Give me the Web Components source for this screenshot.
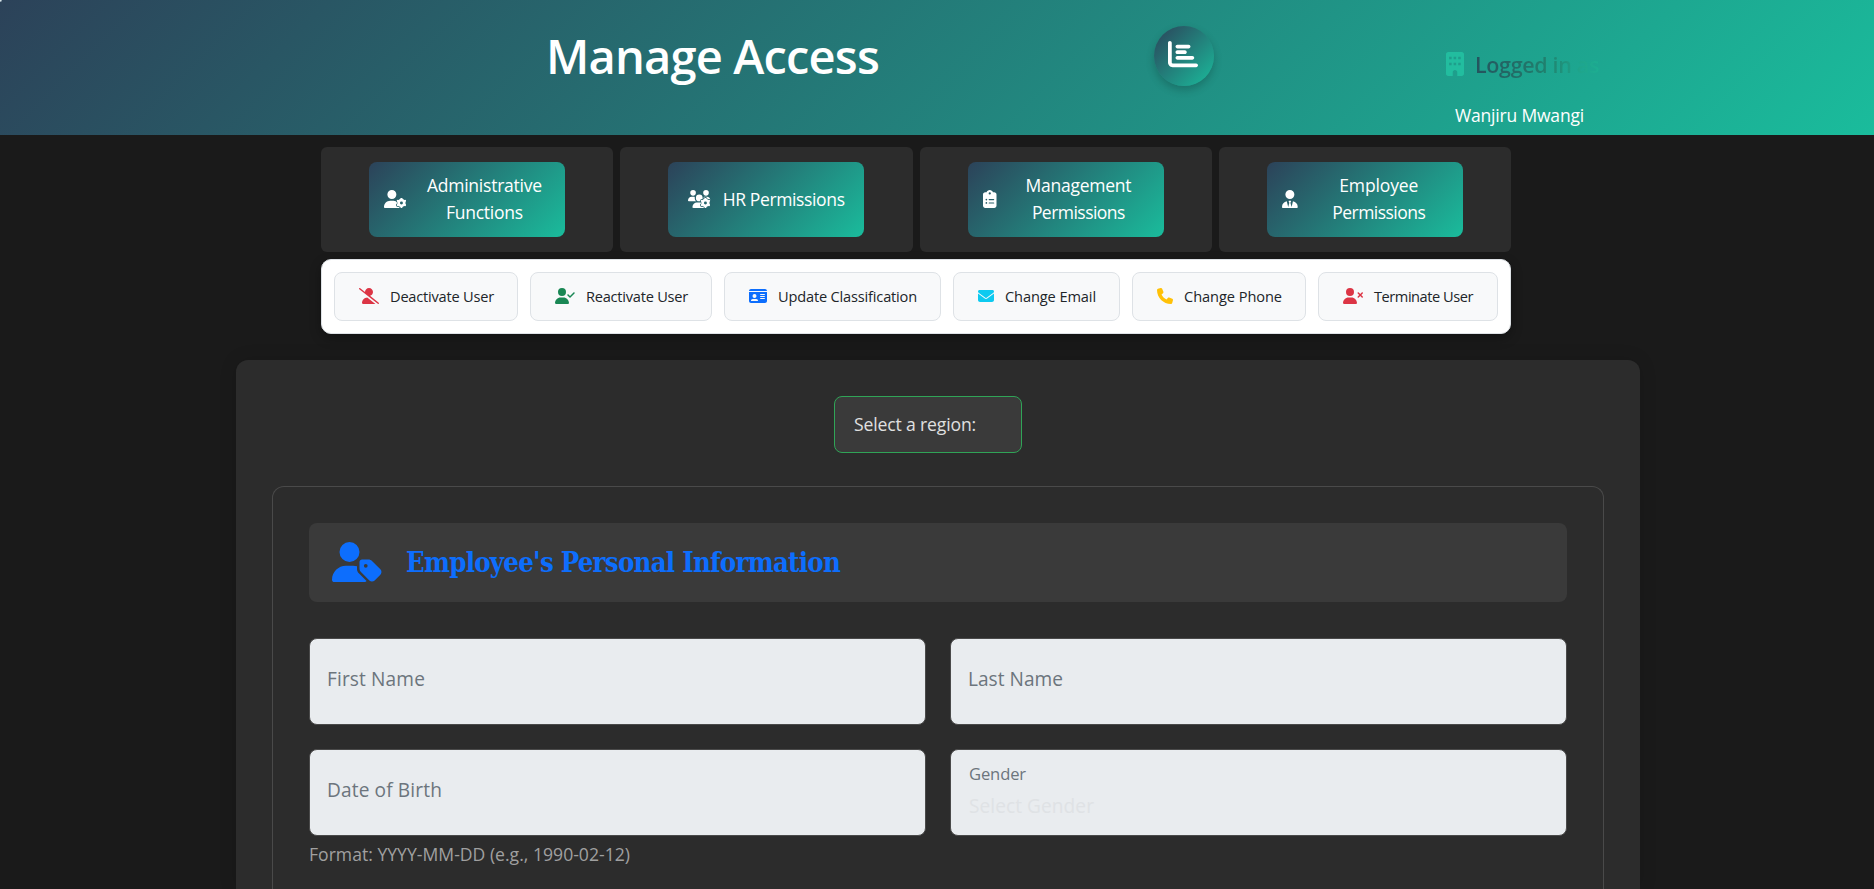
<!DOCTYPE html>
<html lang="en">
<head>
<meta charset="utf-8">
<title>Manage Access</title>
<style>
html,body{margin:0;height:889px;overflow:hidden;background:#1a1a1a}
body{font-family:"Open Sans","Noto Sans",sans-serif;font-stretch:94%;color:#fff}
</style>
</head>
<body>
<manage-page></manage-page>
<script>
const rect=(x,y,w,h)=>`M${x} ${y}h${w}v${h}h${-w}z`;
const USER='M224 256A128 128 0 1 0 224 0a128 128 0 1 0 0 256zm-45.7 48C79.8 304 0 383.8 0 482.3C0 498.7 13.3 512 29.7 512H418.3c16.4 0 29.7-13.3 29.7-29.7C448 383.8 368.2 304 269.7 304H178.3z';
const pill=(x,y,w)=>`M${x} ${y}h${w}c8.8 0 16 7.2 16 16s-7.2 16-16 16h${-w}c-8.8 0-16-7.2-16-16s7.2-16 16-16z`;
const bar=(x,y,w)=>`M${x} ${y}h${w}c17.7 0 32 14.3 32 32s-14.3 32-32 32h${-w}c-17.7 0-32-14.3-32-32s14.3-32 32-32z`;
const spokes='M496 250V486M394 309L598 427M394 427L598 309';
const withGear=(d)=>`<mask id="cut"><rect width="640" height="512" fill="#fff"/><circle cx="496" cy="368" r="130" fill="#000"/><path d="${spokes}" stroke="#000" stroke-width="104" stroke-linecap="round"/></mask>
<mask id="hole"><rect width="640" height="520" fill="#fff"/><circle cx="496" cy="368" r="42" fill="#000"/></mask>
<path mask="url(#cut)" d="${d}"/><g mask="url(#hole)"><circle cx="496" cy="368" r="118"/><path d="${spokes}" stroke="currentColor" stroke-width="64" stroke-linecap="round"/></g>`;
const p=d=>`<path fill-rule="evenodd" d="${d}"/>`;
const ICONS={
 chart:[512,p('M32 32c17.7 0 32 14.3 32 32V400c0 8.8 7.2 16 16 16H480c17.7 0 32 14.3 32 32s-14.3 32-32 32H80c-44.2 0-80-35.8-80-80V64C0 46.3 14.3 32 32 32z'+bar(160,96,192)+bar(160,192,128)+bar(160,288,256))],
 building:[384,p('M48 0C21.5 0 0 21.5 0 48V464c0 26.5 21.5 48 48 48h96V432c0-26.5 21.5-48 48-48s48 21.5 48 48v80h96c26.5 0 48-21.5 48-48V48c0-26.5-21.5-48-48-48H48z'+[66,163,260].map(x=>rect(x,100,54,54)+rect(x,228,54,54)).join(''))],
 userGear:[640,withGear(USER)],
 usersGear:[640,withGear('M144 160A80 80 0 1 0 144 0a80 80 0 1 0 0 160zm368 0A80 80 0 1 0 512 0a80 80 0 1 0 0 160zM0 298.7C0 310.4 9.6 320 21.3 320H234.7c-26.6-23.5-43.3-57.8-43.3-96c0-7.6 .7-15 1.9-22.3c-13.6-6.3-28.7-9.7-44.6-9.7H106.7C47.8 192 0 239.8 0 298.7zM405.3 320H618.7c11.7 0 21.3-9.6 21.3-21.3C640 239.8 592.2 192 533.3 192H490.7c-15.9 0-31 3.5-44.6 9.7c1.3 7.2 1.9 14.7 1.9 22.3c0 38.2-16.8 72.5-42.7 96zM320 320A96 96 0 1 0 320 128a96 96 0 1 0 0 192zM261.3 352C187.7 352 128 411.7 128 485.3c0 14.7 11.9 26.7 26.7 26.7H485.3c14.7 0 26.7-11.9 26.7-26.7C512 411.7 452.3 352 378.7 352z')],
 clipboard:[384,p('M192 0c-41.8 0-77.4 26.7-90.5 64H64C28.7 64 0 92.7 0 128V448c0 35.3 28.7 64 64 64H320c35.3 0 64-28.7 64-64V128c0-35.3-28.7-64-64-64H282.5C269.4 26.7 233.8 0 192 0zm0 64a32 32 0 1 1 0 64 32 32 0 1 1 0-64zM72 272a24 24 0 1 1 48 0 24 24 0 1 1 -48 0zM72 368a24 24 0 1 1 48 0 24 24 0 1 1 -48 0z'+pill(176,256,128)+pill(176,352,128))],
 userTie:[448,p('M224 256A128 128 0 1 0 224 0a128 128 0 1 0 0 256zM209.1 359.2l-18.6-31c-6.4-10.7 1.3-24.2 13.7-24.2H224h19.7c12.4 0 20.1 13.6 13.7 24.2l-18.6 31 33.4 123.9 39.5-161.2c77.2 12 136.3 78.8 136.3 159.4c0 17-13.8 30.7-30.7 30.7H265.1 182.9 30.7C13.8 512 0 498.2 0 481.3c0-80.6 59.1-147.4 136.3-159.4l39.5 161.2 33.4-123.9z')],
 userSlash:[640,p('M38.8 5.1C28.4-3.1 13.3-1.2 5.1 9.2S-1.2 34.7 9.2 42.9l592 464c10.4 8.2 25.5 6.3 33.7-4.1s6.3-25.5-4.1-33.7L353.3 251.6C407.9 237 448 187.2 448 128C448 57.3 390.7 0 320 0C250.2 0 193.5 55.8 192 125.2L38.8 5.1zM264.3 304.3C170.5 309.4 96 387.2 96 482.3c0 16.4 13.3 29.7 29.7 29.7H514.3c3.9 0 7.6-.7 11-2.1l-261-205.6z')],
 userCheck:[640,p(USER+'M625 177L497 305c-9.4 9.4-24.6 9.4-33.9 0l-64-64c-9.4-9.4-9.4-24.6 0-33.9s24.6-9.4 33.9 0l47 47L591 143c9.4-9.4 24.6-9.4 33.9 0s9.4 24.6 0 33.9z')],
 userX:[640,p(USER+'M471 143c9.4-9.4 24.6-9.4 33.9 0l47 47 47-47c9.4-9.4 24.6-9.4 33.9 0s9.4 24.6 0 33.9l-47 47 47 47c9.4 9.4 9.4 24.6 0 33.9s-24.6 9.4-33.9 0l-47-47-47 47c-9.4 9.4-24.6 9.4-33.9 0s-9.4-24.6 0-33.9l47-47-47-47c-9.4-9.4-9.4-24.6 0-33.9z')],
 idCard:[576,p('M0 96l576 0c0-35.3-28.7-64-64-64H64C28.7 32 0 60.7 0 96zm0 32V416c0 35.3 28.7 64 64 64H512c35.3 0 64-28.7 64-64V128H0zM64 405.3c0-29.5 23.9-53.3 53.3-53.3H234.7c29.5 0 53.3 23.9 53.3 53.3c0 5.9-4.8 10.7-10.7 10.7H74.7c-5.9 0-10.7-4.8-10.7-10.7zM176 192a64 64 0 1 1 0 128 64 64 0 1 1 0-128z'+pill(368,192,128)+pill(368,256,128)+pill(368,320,128))],
 envelope:[512,p('M48 64C21.5 64 0 85.5 0 112c0 15.1 7.1 29.3 19.2 38.4L236.8 313.6c11.4 8.5 27 8.5 38.4 0L492.8 150.4c12.1-9.1 19.2-23.3 19.2-38.4c0-26.5-21.5-48-48-48H48zM0 176V384c0 35.3 28.7 64 64 64H448c35.3 0 64-28.7 64-64V176L294.4 339.2c-22.8 17.1-54 17.1-76.8 0L0 176z')],
 phone:[512,p('M164.9 24.6c-7.7-18.6-28-28.5-47.4-23.2l-88 24C12.1 30.2 0 46 0 64C0 311.4 200.6 512 448 512c18 0 33.8-12.1 38.6-29.5l24-88c5.3-19.4-4.6-39.7-23.2-47.4l-96-40c-16.3-6.8-35.2-2.1-46.3 11.6L304.7 368C234.3 334.7 177.3 277.7 144 207.3L193.3 167c13.7-11.2 18.4-30 11.6-46.3l-40-96z')],
 userTag:[640,p('M224 256A128 128 0 1 0 224 0a128 128 0 1 0 0 256zm-45.7 48C79.8 304 0 383.8 0 482.3C0 498.7 13.3 512 29.7 512H418.3c10 0 18.8-4.9 24.2-12.5l-99.2-99.2c-14.9-14.9-23.3-35.1-23.3-56.1v-33c-15.9-4.7-32.8-7.2-50.3-7.2H178.3zM384 224c-17.7 0-32 14.3-32 32v82.7c0 17 6.7 33.3 18.7 45.3L478.1 491.3c18.7 18.7 49.1 18.7 67.9 0l73.4-73.4c18.7-18.7 18.7-49.1 0-67.9L512 242.7c-12-12-28.3-18.7-45.3-18.7H384zm24 80a24 24 0 1 1 48 0 24 24 0 1 1 -48 0z')]
};
function define(name,render,after){
  customElements.define(name,class extends HTMLElement{
    connectedCallback(){
      if(this.shadowRoot)return;
      this.attachShadow({mode:'open'}).innerHTML=render(k=>this.getAttribute(k)||'');
      if(after)after(this);
    }
  });
}

define('ui-icon',a=>{
  const [w,body]=ICONS[a('name')],s=+a('size');
  return `<style>:host{display:block;flex:none;width:${w*s/512}px;height:${s}px}svg{display:block;overflow:visible}</style>
  <svg width="${w*s/512}" height="${s}" viewBox="0 0 ${w} 512" fill="currentColor">${body}</svg>`;
});

/* One line of text, tracked so that it sets to the measure given in "w". */
define('ui-text',a=>`<style>:host{display:block;width:${a('w')}px;white-space:nowrap;font-size:${a('size')}px;line-height:${a('lh')}px}span{display:inline-block}</style><span><slot></slot></span>`,
 el=>{
  const s=el.shadowRoot.querySelector('span'),n=el.textContent.length,w=+el.getAttribute('w');
  const ls=(w-s.getBoundingClientRect().width)/n;
  s.style.letterSpacing=ls+'px';
 });

define('page-header',()=>`<style>
:host{display:grid;grid-template-columns:546px 608px 292px 1fr;height:135px;background:radial-gradient(circle at 0 0,#d8e6ea 0 1px,transparent 2.5px),linear-gradient(135deg,#2c4259,#1abc9c)}
.title{grid-column:2;font-weight:600;margin-top:21px}
.dash{width:60px;height:60px;margin-top:26px;border-radius:50%;background:linear-gradient(135deg,#2c4259,#1abc9c);box-shadow:0 4px 8px rgba(0,0,0,.2);display:flex;align-items:center;justify-content:center}
.dash ui-icon{margin:-4px 2px 0 0}
.who{padding-top:52px}
.row{display:flex;gap:11px;color:#22bd9f}
.as{font-weight:600;color:transparent;background:linear-gradient(90deg,#25525d,#20836f 60%,#1fa58b 85%,#1dae92);-webkit-background-clip:text;background-clip:text}
.name{margin:24px 0 0 9px}
</style>
<ui-text class="title" w="333" size="47" lh="70">Manage Access</ui-text>
<div class="dash"><ui-icon name="chart" size="30"></ui-icon></div>
<div class="who"><div class="row"><ui-icon name="building" size="24"></ui-icon><ui-text class="as" w="124" size="21.5" lh="26">Logged in as</ui-text></div>
<ui-text class="name" w="129" size="17.5" lh="27">Wanjiru Mwangi</ui-text></div>`);

define('role-card',()=>`<style>
:host{display:flex;flex:1;justify-content:center;padding:15px 0;background:#2c2c2c;border-radius:6px}
.btn{box-sizing:border-box;width:196px;height:75px;padding:0 15px;border-radius:8px;background:linear-gradient(135deg,#2c4259,#1abc9c);display:flex;align-items:center;justify-content:center;gap:12px}
.label{display:flex;flex-direction:column;align-items:center;padding-bottom:1px}
.btn ::slotted(ui-icon){margin-top:-1px}
:host([wide]) .label{flex:1}
</style><div class="btn"><slot name="icon"></slot><div class="label"><slot></slot></div></div>`);

define('action-button',a=>`<style>
:host{display:flex;box-sizing:border-box;height:49px;border:1px solid #dee2e6;border-radius:8px;background:#f8f9fa;align-items:center;padding:0 0 1px 24px;width:${a('width')}px;color:#212529}
.i{flex:none;color:${a('color')};margin-right:11px}
</style><ui-icon class="i" name="${a('icon')}" size="16"></ui-icon><slot></slot>`);

define('form-field',()=>`<style>
:host{display:flex;flex-direction:column;box-sizing:border-box;height:87px;border:1px solid #4a4a4a;border-radius:8px;background:#e9ecef;padding:26px 17px 0;color:#6c757d}
:host([floating]){padding:11px 18px 0}
</style><slot></slot>`);

define('section-title',()=>`<style>
:host{display:flex;align-items:center;box-sizing:border-box;height:79px;padding-bottom:1px;border-radius:8px;background:#3a3a3a;color:#0d6efd;padding-left:23px;gap:24px}
.t{font-family:"DejaVu Serif Condensed","DejaVu Serif","Liberation Serif",serif;font-weight:700;font-stretch:75%}
</style><ui-icon name="userTag" size="40"></ui-icon><ui-text class="t" w="434" size="27.3" lh="36">Employee's Personal Information</ui-text>`);

const role=(icon,...lines)=>`<role-card ${lines.length>1?'wide':''}><ui-icon slot="icon" name="${icon}" size="18"></ui-icon>${lines.map(([t,w])=>`<ui-text w="${w}" size="17.5" lh="27">${t}</ui-text>`).join('')}</role-card>`;
const act=(width,icon,color,t,w)=>`<action-button width="${width}" icon="${icon}" color="${color}"><ui-text w="${w}" size="14.6" lh="22">${t}</ui-text></action-button>`;

define('manage-page',()=>`<style>
:host{display:block}
.roles{display:flex;gap:7px;width:1190px;height:105px;margin:12px 0 0 321px}
.roles role-card{box-sizing:border-box}
.actions{box-sizing:border-box;display:flex;justify-content:space-between;width:1190px;height:75px;margin:7px 0 0 321px;padding:12px 12px 0;border:1px solid #dee2e6;border-radius:10px;background:#fff;box-shadow:0 4px 12px rgba(0,0,0,.3)}
.panel{box-sizing:border-box;width:1404px;height:529px;margin:26px 0 0 236px;padding:36px 36px 0;background:#2c2c2c;border-radius:12px 12px 0 0;box-shadow:0 0 18px rgba(0,0,0,.12)}
.region{box-sizing:border-box;width:188px;height:57px;margin-left:562px;padding:12px 19px;border:1px solid #30a457;border-radius:8px;background:#3a3a3a;color:#e0e0e0}
.form{box-sizing:border-box;height:403px;margin-top:33px;border:1px solid #4a4a4a;border-bottom:0;border-radius:12px 12px 0 0;padding:36px 36px 0}
.grid{display:grid;grid-template-columns:1fr 1fr;gap:24px;margin-top:36px}
.ghost{color:#dfe2e5}
.hint{color:#a0a0a0;margin-top:5px}
</style>
<page-header></page-header>
<div class="roles">${role('userGear',['Administrative',115],['Functions',77])}${role('usersGear',['HR Permissions',122])}${role('clipboard',['Management',106],['Permissions',93])}${role('userTie',['Employee',79],['Permissions',93])}</div>
<div class="actions">${act(184,'userSlash','#dc3545','Deactivate User',104)}${act(182,'userCheck','#198754','Reactivate User',102)}${act(217,'idCard','#0d6efd','Update Classification',139)}${act(167,'envelope','#0dcaf0','Change Email',91)}${act(174,'phone','#ffc107','Change Phone',98)}${act(180,'userX','#dc3545','Terminate User',99)}</div>
<div class="panel">
 <div class="region"><ui-text w="122" size="17.6" lh="30">Select a region:</ui-text></div>
 <div class="form">
  <section-title></section-title>
  <div class="grid">
   <form-field><ui-text w="98" size="19.1" lh="29">First Name</ui-text></form-field>
   <form-field><ui-text w="95" size="19.1" lh="29">Last Name</ui-text></form-field>
   <form-field><ui-text w="115" size="19.1" lh="29">Date of Birth</ui-text></form-field>
   <form-field floating><ui-text w="57" size="16.6" lh="26">Gender</ui-text><ui-text class="ghost" w="125" size="19.1" lh="38">Select Gender</ui-text></form-field>
  </div>
  <ui-text class="hint" w="321" size="17.6" lh="27">Format: YYYY-MM-DD (e.g., 1990-02-12)</ui-text>
 </div>
</div>`);
</script>
</body>
</html>
